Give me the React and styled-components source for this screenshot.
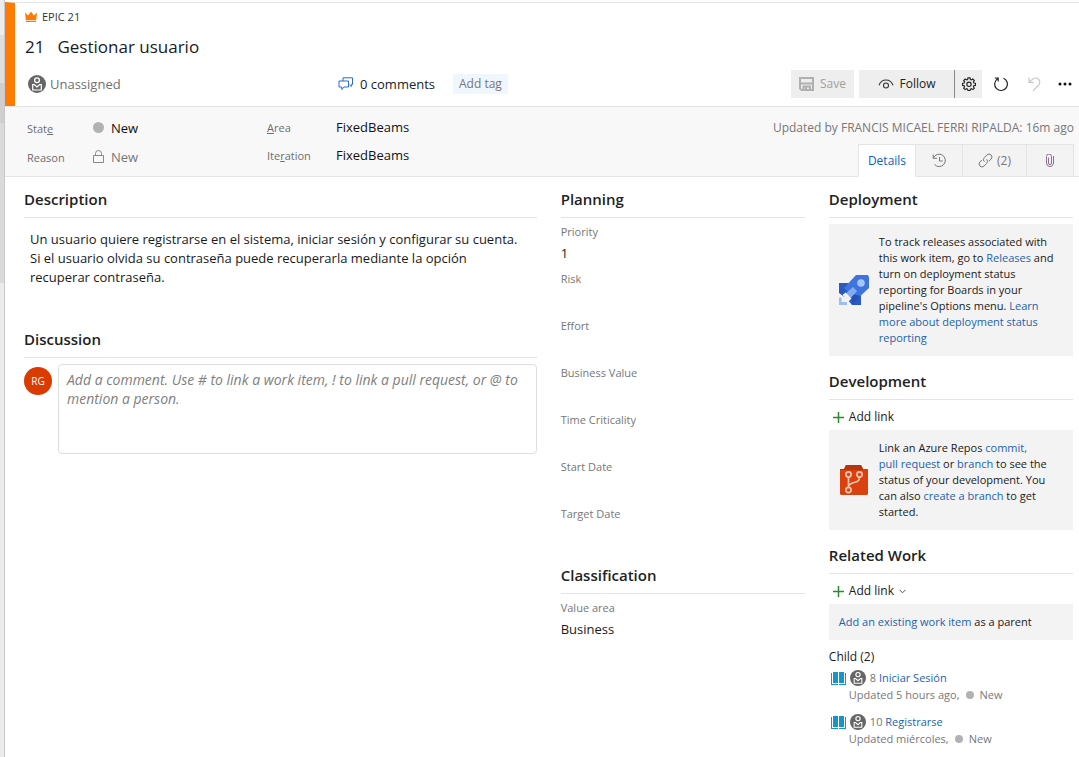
import React from "react";
import styled, { createGlobalStyle } from "styled-components";

const font = '"Open Sans", "Noto Sans", "Liberation Sans", sans-serif';

const GlobalStyle = createGlobalStyle`
  * { box-sizing: border-box; }
  body { margin: 0; background: #fff; color: #1a1a1a; font: 400 12px/16px ${font}; }
  button, textarea { font: inherit; color: inherit; }
  h1, h2, h3, p, ul, dl, dd, dt { margin: 0; padding: 0; font-weight: 400; }
  ul { list-style: none; }
  svg { display: block; flex: none; }
  a { color: #1d62ad; text-decoration: none; }
`;

const Page = styled.div`
  display: flex;
  min-height: 100vh;
`;
const Backdrop = styled.div`
  flex: none;
  width: 5px;
  border-right: 1px solid #c8c8c8;
  background: linear-gradient(#ececec 35px, #dedede 35px, #dedede 83px, #cfcfcf 83px, #cfcfcf 123px, #dadada 123px, #dadada 283px, #ececec 283px);
`;
const WorkItem = styled.main`
  flex: 1;
  min-width: 0;
`;
const Header = styled.header`
  border-top: 1px solid #e4e4e4;
  border-left: 10px solid #ff7b00;
  padding: 1px 0 3px 10px;
  margin-top: 2px;
`;
const TypeRow = styled.div`
  display: flex;
  align-items: center;
  gap: 5px;
  height: 25px;
`;
const TypeLink = styled.a`
  color: #333;
  font-size: 11px;
`;
const TitleRow = styled.div`
  display: flex;
  align-items: center;
  gap: 13px;
  height: 36px;
  font-size: 17px;
  line-height: 24px;
`;
const Title = styled.h1`
  font-size: 17px;
`;
const ActionRow = styled.div`
  display: flex;
  align-items: center;
  height: 38px;
`;
const PlainButton = styled.button`
  display: inline-flex;
  align-items: center;
  gap: ${(p) => p.$gap || 0}px;
  padding: 0;
  border: 0;
  background: none;
  text-align: left;
  color: ${(p) => p.$color || "#222"};
  font-size: 13px;
`;
const Assignee = styled.div`
  width: 313px;
  padding-left: 3px;
  display: flex;
`;
const Tag = styled.button`
  height: 20px;
  margin-left: 18px;
  padding: 0 6px;
  border: 0;
  background: #eff6fc;
  color: #777;
`;
const Tools = styled.div`
  display: flex;
  align-items: center;
  margin-left: auto;
`;
const ToolButton = styled.button`
  display: flex;
  align-items: center;
  justify-content: center;
  gap: 6px;
  width: ${(p) => p.$width}px;
  height: 28px;
  padding: 0;
  border: 0;
  border-left: ${(p) => (p.$divided ? "1px solid #8a8a8a" : "0")};
  margin-right: ${(p) => p.$after || 0}px;
  background: ${(p) => p.$bg || "#eeeeee"};
  color: ${(p) => p.$color || "#222"};
`;
const Summary = styled.section`
  display: flex;
  height: 71px;
  padding-left: 22px;
  border-top: 1px solid #e4e4e4;
  border-bottom: 1px solid #e4e4e4;
  background: #f8f8f8;
`;
const SummaryFields = styled.dl`
  display: grid;
  grid-template-columns: ${(p) => p.$label}px ${(p) => p.$value}px;
  grid-auto-rows: ${(p) => p.$row}px;
  align-content: start;
  align-items: center;
  padding-top: 6px;
`;
const Term = styled.dt`
  padding-top: 2px;
  color: #6e6e6e;
  font-size: 11px;
`;
const Value = styled.dd`
  display: flex;
  align-items: center;
  gap: 7px;
  font-size: 13px;
  color: ${(p) => (p.$muted ? "#777" : "#111")};
`;
const Dot = styled.span`
  flex: none;
  width: ${(p) => p.$size}px;
  height: ${(p) => p.$size}px;
  border-radius: 50%;
  background: #b2b2b2;
`;
const SummarySide = styled.div`
  display: flex;
  flex-direction: column;
  align-items: flex-end;
  justify-content: space-between;
  margin-left: auto;
  padding-right: 5px;
`;
const Updated = styled.p`
  padding-top: 13px;
  color: #777;
  white-space: nowrap;
`;
const Tabs = styled.div`
  display: flex;
  height: 33px;
  margin-bottom: -1px;
`;
const Tab = styled.button`
  display: flex;
  align-items: center;
  justify-content: center;
  gap: 4px;
  width: ${(p) => p.$width}px;
  padding: 0;
  border: 1px solid #e4e4e4;
  border-left-width: ${(p) => (p.$active ? 1 : 0)}px;
  border-bottom-color: ${(p) => (p.$active ? "#fff" : "#e4e4e4")};
  background: ${(p) => (p.$active ? "#fff" : "#f3f3f3")};
  color: ${(p) => (p.$active ? "#0f5fbf" : "#777")};
`;
const Columns = styled.div`
  display: grid;
  grid-template-columns: 21fr 10fr 10fr;
  gap: 24px;
  padding: 0 6px 8px 19px;
`;
const Section = styled.section`
  margin-bottom: ${(p) => p.$after || 0}px;
`;
const SectionTitle = styled.h2`
  padding: 10px 0 6px;
  margin-bottom: 6px;
  border-bottom: 1px solid #e4e4e4;
  color: #222;
  font-size: 15px;
  font-weight: 600;
  line-height: 24px;
`;
const Description = styled.div`
  padding: 6px 12px 0 6px;
  font-size: 13px;
  line-height: 19px;
`;
const Compose = styled.div`
  display: flex;
  align-items: flex-start;
  gap: 6px;
`;
const Persona = styled.span`
  flex: none;
  width: 28px;
  height: 28px;
  margin-top: 3px;
  border-radius: 50%;
  background: #da3b01;
  color: #fff;
  font-size: 10px;
  line-height: 28px;
  text-align: center;
`;
const CommentBox = styled.textarea`
  flex: 1;
  min-width: 0;
  height: 90px;
  padding: 5px 8px;
  border: 1px solid #dedede;
  border-radius: 4px;
  background: #fff;
  font-size: 14px;
  line-height: 19px;
  resize: none;
  &::placeholder { color: #808080; font-style: italic; opacity: 1; }
`;
const Field = styled.div`
  height: 47px;
`;
const FieldLabel = styled.dt`
  color: #777;
  font-size: 11px;
  line-height: 16px;
`;
const FieldValue = styled.dd`
  padding-top: 3px;
  font-size: 13px;
  line-height: 20px;
`;
const Card = styled.div`
  display: flex;
  align-items: center;
  gap: 10px;
  padding: 10px;
  background: #f3f3f3;
  font-size: 11px;
`;
const UnbrokenLink = styled.a`
  white-space: nowrap;
`;
const AddLink = styled.button`
  display: flex;
  align-items: center;
  gap: 5px;
  height: 22px;
  margin-bottom: 2px;
  padding: 0 0 0 4px;
  border: 0;
  background: none;
`;
const ChildHeading = styled.h3`
  margin-top: 9px;
  font-size: 12px;
  line-height: 16px;
`;
const Child = styled.li`
  height: 44px;
  padding: 4px 0 0 2px;
  font-size: 11px;
`;
const ChildTitle = styled.div`
  display: flex;
  align-items: center;
  gap: 4px;
  height: 18px;
  color: #777;
`;
const ChildMeta = styled.div`
  display: flex;
  align-items: center;
  gap: 6px;
  padding-left: 18px;
  color: #777;
  line-height: 16px;
`;

const Crown = () => (
  <svg width="12" height="12" viewBox="0 0 12 12" fill="#ff7b00">
    <path d="M0 1.5 3.2 4.5 6 .5l2.8 4L12 1.5 11.2 9H.8zM.8 9.7h10.4V11H.8z" />
  </svg>
);
const Avatar = ({ size }) => (
  <svg width={size} height={size} viewBox="0 0 18 18" fill="none">
    <circle cx="9" cy="9" r="9" fill="#666" />
    <circle cx="9" cy="5.2" r="2.4" stroke="#fff" strokeWidth="1.3" />
    <path d="M4.7 15V9.6h1.6L9 12l2.7-2.4h1.6V15z" stroke="#fff" strokeWidth="1.2" />
  </svg>
);
const Comments = () => (
  <svg width="16" height="14" viewBox="0 0 16 14" fill="none" stroke="#2b6cc4">
    <path d="M5 4V.8h9.5V7.5h-1.2v2L11.5 8M1 4h9.5v6H6L3.8 12.5V10H1z" />
  </svg>
);
const Save = () => (
  <svg width="15" height="14" viewBox="0 0 15 14" fill="none" stroke="#b0b0b0" strokeWidth="2">
    <path d="M1 1h13v12H2.6L1 11.4zM2 6.5h11M4.500 13V9.500h6.500V13M7 10.500V13" />
  </svg>
);
const Eye = () => (
  <svg width="16" height="12" viewBox="0 0 16 12" fill="none" stroke="#333" strokeWidth="1.1">
    <path d="M1 7.2C2.2 3.8 4.8 2 8 2s5.8 1.8 7 5.2" />
    <circle cx="8" cy="7.5" r="2.5" />
  </svg>
);
const Gear = () => (
  <svg width="14" height="14" viewBox="0 0 16 16" fill="none" stroke="#222" strokeWidth="1.3">
    <path d="M6.8 1h2.4l.4 1.900 1.200.5 1.600-1.100 1.700 1.700L13 5.600l.5 1.200 1.900.4v2.400l-1.900.3-.5 1.200 1.100 1.600-1.700 1.700-1.600-1.100-1.200.5-.4 1.700H6.800l-.4-1.700-1.200-.5-1.600 1.100-1.700-1.700L3 11.100l-.5-1.200L.7 9.600V7.200l1.800-.4L3 5.600 1.900 4l1.700-1.700 1.600 1.100 1.200-.5z" />
    <circle cx="8" cy="8.3" r="2.5" />
  </svg>
);
const Refresh = () => (
  <svg width="16" height="16" viewBox="0 0 16 16" fill="none" stroke="#222" strokeWidth="1.2">
    <path d="M10.5 2.2A6.4 6.4 0 1 1 4.5 2.8M1.8 2h3.4v3.6" />
  </svg>
);
const Undo = () => (
  <svg width="14" height="16" viewBox="0 0 14 16" fill="none" stroke="#c8c8c8" strokeWidth="1.2">
    <path d="M2 1.5v5h5M2.2 6.3 5.6 3.2a4.2 4.2 0 0 1 5.9 6L6 14.8" />
  </svg>
);
const More = () => (
  <svg width="14" height="4" viewBox="0 0 14 4" fill="#111">
    <circle cx="2" cy="2" r="1.5" /><circle cx="7" cy="2" r="1.5" /><circle cx="12" cy="2" r="1.5" />
  </svg>
);
const Lock = () => (
  <svg width="11" height="14" viewBox="0 0 11 14" fill="none" stroke="#888">
    <path d="M.5 5.5h10v7H.5zM2.5 5.5V3.5a3 3 0 0 1 6 0v2" />
  </svg>
);
const History = () => (
  <svg width="15" height="15" viewBox="0 0 15 15" fill="none" stroke="#777">
    <path d="M1.2 1.5v3.8H5M1.4 5A6.2 6.2 0 1 1 2.500 11.500M7.500 4v4h3.200" />
  </svg>
);
const LinkIcon = () => (
  <svg width="15" height="15" viewBox="0 0 15 15" fill="none" stroke="#777">
    <path d="M6.3 8.7a2.900 2.900 0 0 1 0-4.100l2.700-2.700a2.900 2.900 0 0 1 4.100 4.100l-2 2M8.700 6.300a2.900 2.900 0 0 1 0 4.100L6 13.100A2.900 2.900 0 0 1 1.900 9l2-2" />
  </svg>
);
const Clip = () => (
  <svg width="8" height="13" viewBox="0 0 8 13" fill="none" stroke="#8b6f8f">
    <path d="M2.5 3.5v5.5a1.5 1.5 0 0 0 3 0V2.5a2 2 0 0 0-5 0V9a3.5 3.5 0 0 0 7 0V2" />
  </svg>
);
const Rocket = () => (
  <svg width="30" height="30" viewBox="0 0 30 30">
    <path d="M0 8h13l9 9v13h-9L8 24 0 18z" fill="#2a59c2" />
    <path d="M17 0h11.5L30 1.5V13L17 25 5 13z" fill="#3f74de" />
    <path d="M10 18 21 21 13 30V25z" fill="#2451b5" />
    <path d="m5 20 9-8 4 4-8 9z" fill="#83acf0" />
    <path d="m3.5 20 3-2.5 6 6-3 3z" fill="#f3f3f3" />
    <circle cx="22" cy="8" r="3.8" fill="#a5c6f9" />
    <path d="M0 22.5h2.5V27H8v3H0z" fill="#9ebcf4" />
  </svg>
);
const Repo = () => (
  <svg width="30" height="30" viewBox="0 0 30 30" fill="none">
    <path d="M1 4h4l2-4h15l2 4h5v25l-1 1H2l-1-1z" fill="#d9410f" />
    <path d="M1 4h4l2-4h15l2 4v1H1z" fill="#b83410" />
    <g stroke="#f6c3ac" strokeWidth="1.7">
      <circle cx="9.5" cy="9.5" r="2.6" /><circle cx="20.5" cy="9.5" r="2.6" /><circle cx="9.5" cy="25" r="2.6" />
      <path d="M9.5 12v10.5M20.5 12c0 4-2 4.5-5.5 5.5s-5 2.500-5.500 4" />
    </g>
  </svg>
);
const Plus = () => (
  <svg width="11" height="11" viewBox="0 0 11 11" stroke="#2b8a2b" strokeWidth="1.5">
    <path d="M5.5 0v11M0 5.5h11" />
  </svg>
);
const Chevron = () => (
  <svg width="7" height="5" viewBox="0 0 7 5" fill="none" stroke="#555">
    <path d="m.5.8 3 3 3-3" />
  </svg>
);
const Book = () => (
  <svg width="15" height="13" viewBox="0 0 15 13" fill="#1795c4">
    <path d="M2 0h5v11H2zM8 0h5v11H8zM0 1h1v11h6v1H0zM14 1h1v12H8v-1h6z" />
  </svg>
);

const planning = [["Priority", "1"], ["Risk", ""], ["Effort", ""], ["Business Value", ""], ["Time Criticality", ""], ["Start Date", ""], ["Target Date", ""]];
const children = [
  { id: 8, title: "Iniciar Sesión", updated: "Updated 5 hours ago," },
  { id: 10, title: "Registrarse", updated: "Updated miércoles," },
];

const Fields = ({ items }) => (
  <dl>
    {items.map(([label, value]) => (
      <Field key={label}>
        <FieldLabel>{label}</FieldLabel>
        <FieldValue>{value}</FieldValue>
      </Field>
    ))}
  </dl>
);

export default function App() {
  return (
    <Page>
      <GlobalStyle />
      <Backdrop />
      <WorkItem>
        <Header>
          <TypeRow><Crown /><TypeLink href="#epic">EPIC 21</TypeLink></TypeRow>
          <TitleRow><span>21</span><Title>Gestionar usuario</Title></TitleRow>
          <ActionRow>
            <Assignee><PlainButton $gap={4} $color="#707070"><Avatar size={18} />Unassigned</PlainButton></Assignee>
            <PlainButton $gap={6}><Comments />0 comments</PlainButton>
            <Tag>Add tag</Tag>
            <Tools>
              <ToolButton $width={63} $after={5} $color="#a0a0a0" disabled><Save />Save</ToolButton>
              <ToolButton $width={95}><Eye />Follow</ToolButton>
              <ToolButton $width={28} $after={3} $divided aria-label="Settings"><Gear /></ToolButton>
              <ToolButton $width={32} $bg="none" aria-label="Refresh"><Refresh /></ToolButton>
              <ToolButton $width={34} $bg="none" aria-label="Undo"><Undo /></ToolButton>
              <ToolButton $width={28} $bg="none" aria-label="More actions"><More /></ToolButton>
            </Tools>
          </ActionRow>
        </Header>
        <Summary>
          <SummaryFields $label={66} $value={174} $row={29}>
            <Term>Stat<u>e</u></Term><Value><Dot $size={11} />New</Value>
            <Term>Reason</Term><Value $muted><Lock />New</Value>
          </SummaryFields>
          <SummaryFields $label={69} $value={174} $row={28}>
            <Term><u>A</u>rea</Term><Value>FixedBeams</Value>
            <Term>Ite<u>r</u>ation</Term><Value>FixedBeams</Value>
          </SummaryFields>
          <SummarySide>
            <Updated>Updated by FRANCIS MICAEL FERRI RIPALDA: 16m ago</Updated>
            <Tabs role="tablist">
              <Tab role="tab" aria-selected="true" $active $width={58}>Details</Tab>
              <Tab role="tab" $width={47} aria-label="History"><History /></Tab>
              <Tab role="tab" $width={64}><LinkIcon />(2)</Tab>
              <Tab role="tab" $width={47} aria-label="Attachments"><Clip /></Tab>
            </Tabs>
          </SummarySide>
        </Summary>
        <Columns>
          <div>
            <Section $after={30}>
              <SectionTitle>Description</SectionTitle>
              <Description>
                <p>Un usuario quiere registrarse en el sistema, iniciar sesión y configurar su cuenta.</p>
                <p>Si el usuario olvida su contraseña puede recuperarla mediante la opción recuperar contraseña.</p>
              </Description>
            </Section>
            <Section>
              <SectionTitle>Discussion</SectionTitle>
              <Compose>
                <Persona>RG</Persona>
                <CommentBox aria-label="Add a comment" placeholder="Add a comment. Use # to link a work item, ! to link a pull request, or @ to mention a person." />
              </Compose>
            </Section>
          </div>
          <div>
            <Section>
              <SectionTitle>Planning</SectionTitle>
              <Fields items={planning} />
            </Section>
            <Section>
              <SectionTitle>Classification</SectionTitle>
              <Fields items={[["Value area", "Business"]]} />
            </Section>
          </div>
          <div>
            <Section $after={3}>
              <SectionTitle>Deployment</SectionTitle>
              <Card>
                <Rocket />
                <p>To track releases associated with this work item, go to <a href="#releases">Releases</a> and turn on deployment status reporting for Boards in your pipeline's Options menu. <a href="#learn">Learn more about deployment status reporting</a></p>
              </Card>
            </Section>
            <Section $after={3}>
              <SectionTitle>Development</SectionTitle>
              <AddLink><Plus />Add link</AddLink>
              <Card>
                <Repo />
                <p>Link an Azure Repos <a href="#commit">commit,</a> <UnbrokenLink href="#pull">pull request</UnbrokenLink> or <a href="#branch">branch</a> to see the status of your development. You can also <UnbrokenLink href="#create">create a branch</UnbrokenLink> to get started.</p>
              </Card>
            </Section>
            <Section>
              <SectionTitle>Related Work</SectionTitle>
              <AddLink><Plus />Add link<Chevron /></AddLink>
              <Card><p><a href="#existing">Add an existing work item</a> as a parent</p></Card>
              <ChildHeading>Child (2)</ChildHeading>
              <ul>
                {children.map((c) => (
                  <Child key={c.id}>
                    <ChildTitle><Book /><Avatar size={16} /><span>{c.id} <a href={`#${c.id}`}>{c.title}</a></span></ChildTitle>
                    <ChildMeta>{c.updated}<Dot $size={8} />New</ChildMeta>
                  </Child>
                ))}
              </ul>
            </Section>
          </div>
        </Columns>
      </WorkItem>
    </Page>
  );
}
